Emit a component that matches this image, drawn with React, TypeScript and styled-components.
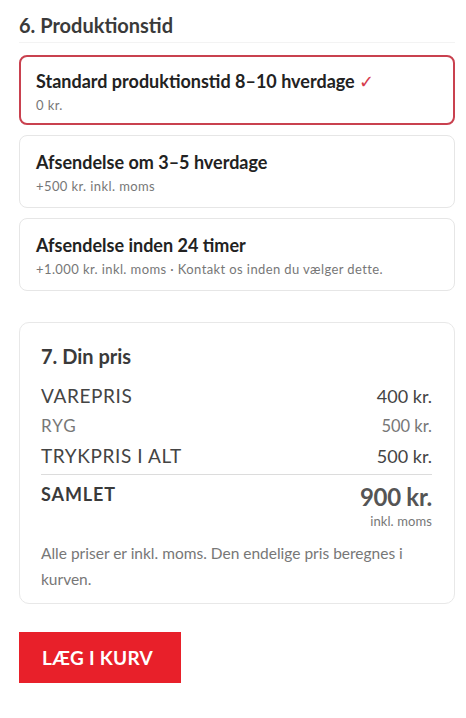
import React from "react";
import styled, { createGlobalStyle } from "styled-components";

const Global = createGlobalStyle`
  html, body { margin: 0; padding: 0; background: #fff; }
  body { font-family: Lato, "Open Sans", Arial, sans-serif; color: #333; }
  * { box-sizing: border-box; }
`;

const Page = styled.div`
  padding: 11px 11px 0 19px;
  display: flex;
  flex-direction: column;
`;

const SectionTitle = styled.h2`
  margin: 0;
  font-size: 20px;
  line-height: 28px;
  font-weight: 700;
  color: #3a3a3a;
  padding-bottom: 3px;
  border-bottom: 1px solid #f3f3f3;
`;

const Options = styled.div`
  margin-top: 12px;
  display: flex;
  flex-direction: column;
  gap: 10px;
`;

const OptionCard = styled.div<{ $selected?: boolean }>`
  border: ${(p) => (p.$selected ? "2px solid #c9414f" : "1px solid #e6e6e6")};
  border-radius: 8px;
  padding: ${(p) => (p.$selected ? "12px 15px 9px" : "14px 16px 12px")};
  background: #fff;
`;

const OptionTitle = styled.div`
  font-size: 18px;
  line-height: 24px;
  font-weight: 700;
  color: #222;
  display: flex;
  align-items: center;
  gap: 4px;
`;

const Check = styled.span`
  color: #d63a4c;
  font-size: 18px;
  font-weight: 400;
`;

const OptionSub = styled.div`
  font-size: 13px;
  line-height: 18px;
  letter-spacing: 0.4px;
  color: #777;
  margin-top: 3px;
`;

const PriceCard = styled.div`
  margin-top: 31px;
  border: 1px solid #e8e8e8;
  border-radius: 10px;
  padding: 19px 22px 11px 21px;
`;

const PriceTitle = styled.h3`
  margin: 0 0 11px;
  font-size: 20px;
  line-height: 28px;
  font-weight: 700;
  color: #3a3a3a;
`;

const Row = styled.div<{ $small?: boolean }>`
  display: flex;
  justify-content: space-between;
  align-items: baseline;
  line-height: 29px;
  color: ${(p) => (p.$small ? "#777" : "#444")};
  font-size: ${(p) => (p.$small ? "16.5px" : "18px")};
`;

const RowLabel = styled.span<{ $small?: boolean }>`
  letter-spacing: ${(p) => (p.$small ? "1px" : "0.6px")};
  font-size: ${(p) => (p.$small ? "17px" : "19px")};
`;

const Divider = styled.hr`
  border: 0;
  border-top: 1px solid #dcdcdc;
  margin: 3px 0 0;
`;

const TotalRow = styled.div`
  display: flex;
  justify-content: space-between;
  align-items: flex-start;
  margin-top: 7px;
`;

const TotalLabel = styled.span`
  font-size: 18px;
  line-height: 24px;
  font-weight: 700;
  letter-spacing: 0.9px;
  color: #3a3a3a;
`;

const TotalValue = styled.div`
  display: flex;
  flex-direction: column;
  align-items: flex-end;
`;

const TotalAmount = styled.span`
  font-size: 24px;
  line-height: 30px;
  font-weight: 700;
  color: #555;
  letter-spacing: -0.3px;
`;

const TotalNote = styled.span`
  font-size: 13px;
  line-height: 16px;
  letter-spacing: 0.1px;
  color: #777;
  margin-top: 1px;
`;

const Note = styled.p`
  margin: 11px 0 0;
  font-size: 15.5px;
  line-height: 26px;
  color: #777;
`;

const CartButton = styled.button`
  margin-top: 28px;
  align-self: flex-start;
  width: 162px;
  height: 51px;
  border: 0;
  border-radius: 0;
  background: #e8202a;
  color: #fff;
  font-family: Lato, Arial, sans-serif;
  font-size: 19px;
  font-weight: 700;
  letter-spacing: 0.3px;
  text-align: left;
  padding: 0 0 0 23px;
  cursor: pointer;
`;

const options = [
  { title: "Standard produktionstid 8–10 hverdage", sub: "0 kr.", selected: true },
  { title: "Afsendelse om 3–5 hverdage", sub: "+500 kr. inkl. moms" },
  {
    title: "Afsendelse inden 24 timer",
    sub: "+1.000 kr. inkl. moms · Kontakt os inden du vælger dette.",
  },
];

export default function App() {
  return (
    <>
      <Global />
      <Page>
        <SectionTitle>6. Produktionstid</SectionTitle>
        <Options>
          {options.map((o) => (
            <OptionCard key={o.title} $selected={o.selected}>
              <OptionTitle>
                {o.title}
                {o.selected && <Check>✓</Check>}
              </OptionTitle>
              <OptionSub>{o.sub}</OptionSub>
            </OptionCard>
          ))}
        </Options>
        <PriceCard>
          <PriceTitle>7. Din pris</PriceTitle>
          <Row>
            <RowLabel>VAREPRIS</RowLabel>
            <span>400 kr.</span>
          </Row>
          <Row $small>
            <RowLabel $small>RYG</RowLabel>
            <span>500 kr.</span>
          </Row>
          <Row>
            <RowLabel>TRYKPRIS I ALT</RowLabel>
            <span>500 kr.</span>
          </Row>
          <Divider />
          <TotalRow>
            <TotalLabel>SAMLET</TotalLabel>
            <TotalValue>
              <TotalAmount>900 kr.</TotalAmount>
              <TotalNote>inkl. moms</TotalNote>
            </TotalValue>
          </TotalRow>
          <Note>Alle priser er inkl. moms. Den endelige pris beregnes i kurven.</Note>
        </PriceCard>
        <CartButton>LÆG I KURV</CartButton>
      </Page>
    </>
  );
}
